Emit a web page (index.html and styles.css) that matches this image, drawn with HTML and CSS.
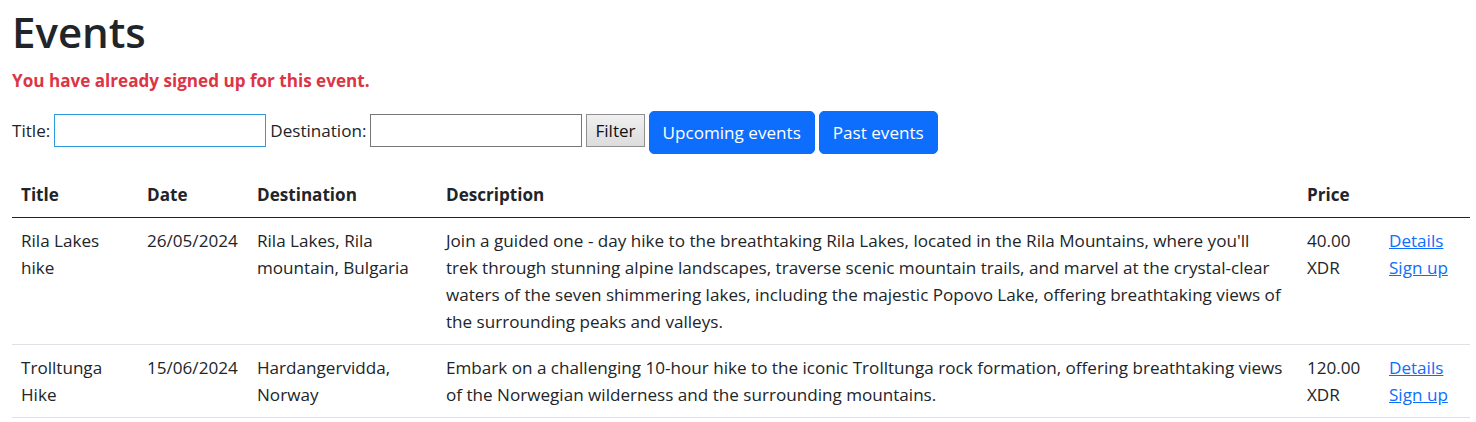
FILE: index.html
```html
<!DOCTYPE html>
<html lang="en">
<head>
<meta charset="utf-8">
<title>Events</title>
<link rel="stylesheet" href="styles.css">
</head>
<body>
<main class="page">
  <h1 class="title">Events</h1>
  <div class="alert-text">You have already signed up for this event.</div>
  <form class="filter">
    <label class="label" for="t">Title:</label>
    <input class="input input-focus" id="t" type="text">
    <label class="label" for="d">Destination:</label>
    <input class="input" id="d" type="text">
    <button class="btn-plain" type="button">Filter</button>
    <button class="btn-primary" type="button">Upcoming events</button>
    <button class="btn-primary" type="button">Past events</button>
  </form>
  <table class="events">
    <colgroup>
      <col class="c-title"><col class="c-date"><col class="c-dest"><col class="c-desc"><col class="c-price"><col class="c-act">
    </colgroup>
    <thead>
      <tr><th>Title</th><th>Date</th><th>Destination</th><th>Description</th><th>Price</th><th></th></tr>
    </thead>
    <tbody>
      <tr>
        <td>Rila Lakes hike</td>
        <td>26/05/2024</td>
        <td>Rila Lakes, Rila mountain, Bulgaria</td>
        <td class="desc">Join a guided one - day hike to the breathtaking Rila Lakes, located in the Rila Mountains, where you'll trek through stunning alpine landscapes, traverse scenic mountain trails, and marvel at the crystal-clear waters of the seven shimmering lakes, including the majestic Popovo Lake, offering breathtaking views of the surrounding peaks and valleys.</td>
        <td>40.00 XDR</td>
        <td><a class="link" href="#">Details</a><a class="link" href="#">Sign up</a></td>
      </tr>
      <tr>
        <td>Trolltunga Hike</td>
        <td>15/06/2024</td>
        <td>Hardangervidda, Norway</td>
        <td class="desc">Embark on a challenging 10-hour hike to the iconic Trolltunga rock formation, offering breathtaking views of the Norwegian wilderness and the surrounding mountains.</td>
        <td>120.00 XDR</td>
        <td><a class="link" href="#">Details</a><a class="link" href="#">Sign up</a></td>
      </tr>
    </tbody>
  </table>
</main>
</body>
</html>
```

FILE: styles.css
```css
* { box-sizing: border-box; }
body {
  margin: 0;
  font-family: "Open Sans", "Noto Sans", sans-serif;
  font-size: 17.1px;
  line-height: 27px;
  color: #212529;
  background: #fff;
}
.page { padding: 0 6px 0 12px; }
.title {
  margin: 5px 0 8px;
  font-size: 42px;
  line-height: 54px;
  font-weight: 600;
}
.alert-text {
  color: #dc3545;
  font-weight: 700;
}
.filter {
  display: flex;
  align-items: flex-start;
  gap: 4px;
  margin: 17px 0 18px;
}
.label { margin-top: 6px; }
.input {
  width: 212px;
  height: 33px;
  margin-top: 3px;
  border: 1px solid #767676;
  border-radius: 0;
  padding: 2px 4px;
  font: inherit;
  background: #fff;
}
.input-focus { border-color: #2d9cdb; outline: none; }
.btn-plain {
  height: 33px;
  margin-top: 3px;
  padding: 0 8px;
  border: 1px solid #8f8f8f;
  background: linear-gradient(#f0f0f0, #dcdcdc);
  font: inherit;
  color: #111;
  border-radius: 0;
}
.btn-primary {
  height: 43px;
  padding: 0 13px;
  border: 1px solid #0d6efd;
  border-radius: 5px;
  background: #0d6efd;
  color: #fff;
  font: inherit;
}
.events {
  width: 100%;
  border-collapse: collapse;
  table-layout: fixed;
}
.c-title { width: 126px; }
.c-date { width: 110px; }
.c-dest { width: 189px; }
.c-desc { width: 861px; }
.c-price { width: 82px; }
.c-act { width: 90px; }
.events th, .events td {
  padding: 9px;
  text-align: left;
  vertical-align: top;
}
.events td.desc { padding-right: 13px; }
.events th {
  font-weight: 700;
  border-bottom: 1px solid #212529;
}
.events td { border-bottom: 1px solid #dee2e6; }
.link {
  display: block;
  width: max-content;
  color: #0d6efd;
  text-decoration: underline;
}
```
